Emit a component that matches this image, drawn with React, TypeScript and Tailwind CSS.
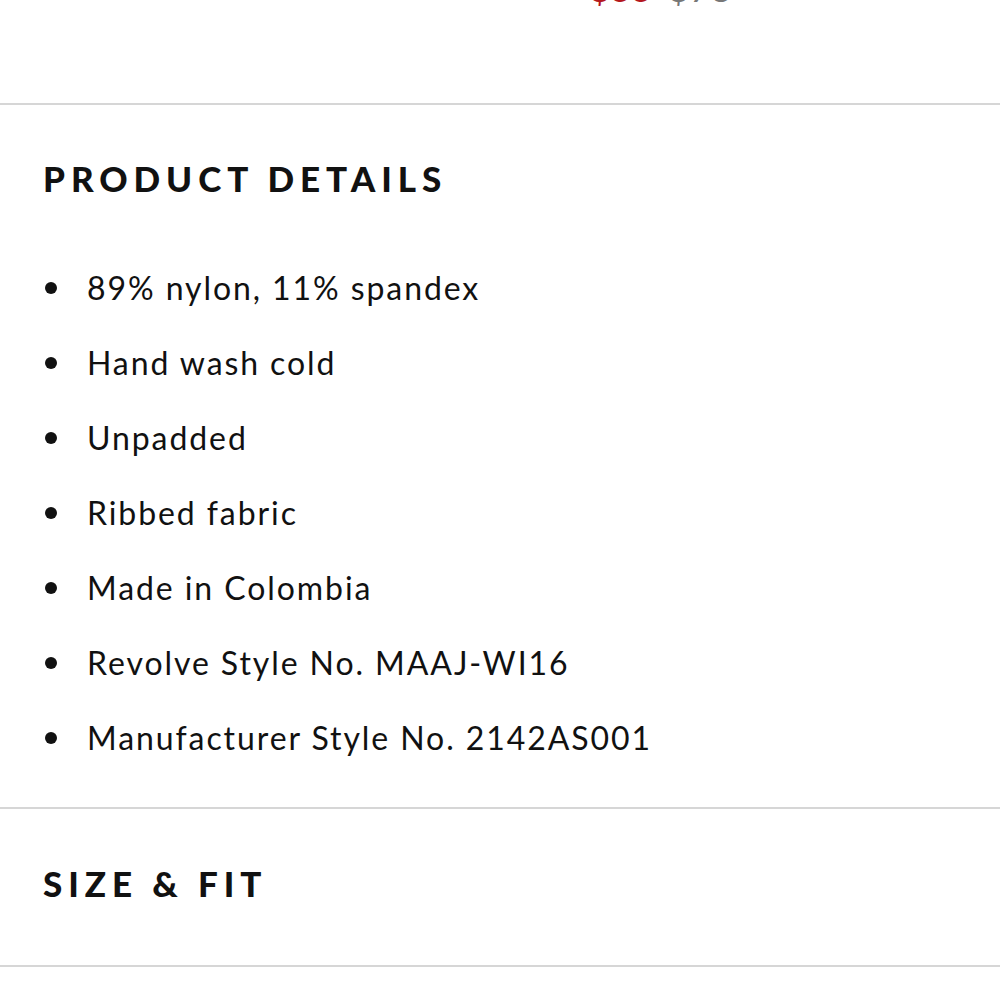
const details = [
  '89% nylon, 11% spandex',
  'Hand wash cold',
  'Unpadded',
  'Ribbed fabric',
  'Made in Colombia',
  'Revolve Style No. MAAJ-WI16',
  'Manufacturer Style No. 2142AS001',
];

function App() {
  return (
    <div className="w-[1000px] h-[1000px] bg-white text-[#111] font-['Lato',sans-serif] overflow-hidden">
      {/* price row, mostly scrolled off the top */}
      <div className="h-[103px] relative overflow-hidden">
        <div className="absolute left-[590px] -top-[30px] flex gap-4 text-[36px] leading-[36px]">
          <span className="text-[#b4181e]">$55</span>
          <span className="text-[#777]">$78</span>
        </div>
      </div>

      <section className="border-t-2 border-[#d6d6d6] pt-[55px] pb-[32px] px-[43px]">
        <h2 className="text-[35px] leading-[36px] font-black tracking-[0.17em]">PRODUCT DETAILS</h2>
        <ul className="mt-[54px] flex flex-col">
          {details.map((d) => (
            <li key={d} className="flex items-center h-[75px] text-[32px] tracking-[0.06em]">
              <span className="w-[12px] h-[12px] rounded-full bg-[#111] ml-[2px] mr-[30px]" />
              {d}
            </li>
          ))}
        </ul>
      </section>

      <section className="border-t-2 border-[#d6d6d6] h-[158px] pb-[8px] flex items-center px-[43px]">
        <h2 className="text-[35px] leading-[36px] font-black tracking-[0.17em]">SIZE &amp; FIT</h2>
      </section>
      <div className="border-t-2 border-[#d6d6d6]" />
    </div>
  );
}

export default App;
